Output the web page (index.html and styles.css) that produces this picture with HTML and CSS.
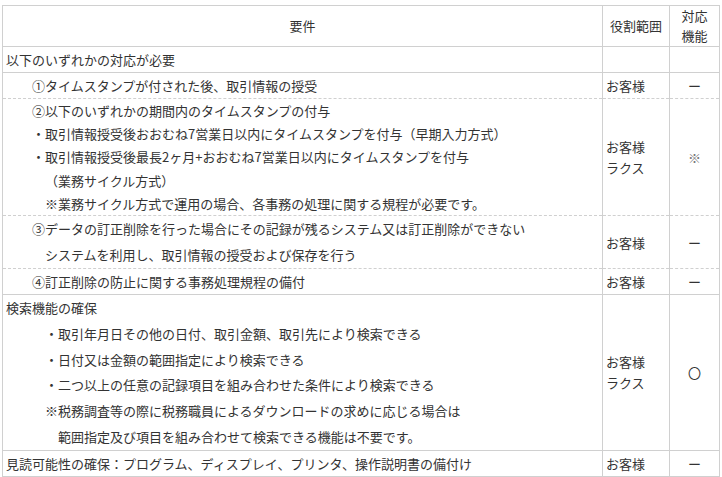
FILE: index.html
```html
<!DOCTYPE html>
<html lang="ja">
<head>
<meta charset="utf-8">
<title>要件</title>
<link rel="stylesheet" href="styles.css">
</head>
<body>
<div class="wrap">
<table class="req">
  <colgroup>
    <col class="c1">
    <col class="c2">
    <col class="c3">
  </colgroup>
  <thead>
    <tr class="head">
      <th>要件</th>
      <th>役割範囲</th>
      <th>対応<br>機能</th>
    </tr>
  </thead>
  <tbody>
    <tr class="single">
      <td class="main">以下のいずれかの対応が必要</td>
      <td></td>
      <td></td>
    </tr>
    <tr class="single dash-b">
      <td class="main"><div class="in1">①タイムスタンプが付された後、取引情報の授受</div></td>
      <td class="who">お客様</td>
      <td class="mark">ー</td>
    </tr>
    <tr class="multi dash-t dash-b">
      <td class="main">
        <div class="in1">②以下のいずれかの期間内のタイムスタンプの付与</div>
        <div class="in1">・取引情報授受後おおむね7営業日以内にタイムスタンプを付与（早期入力方式）</div>
        <div class="in1">・取引情報授受後最長2ヶ月+おおむね7営業日以内にタイムスタンプを付与</div>
        <div class="in2">（業務サイクル方式）</div>
        <div class="in2">※業務サイクル方式で運用の場合、各事務の処理に関する規程が必要です。</div>
      </td>
      <td class="who"><div>お客様</div><div>ラクス</div></td>
      <td class="mark light">※</td>
    </tr>
    <tr class="two dash-t dash-b">
      <td class="main">
        <div class="in1">③データの訂正削除を行った場合にその記録が残るシステム又は訂正削除ができない</div>
        <div class="in2">システムを利用し、取引情報の授受および保存を行う</div>
      </td>
      <td class="who">お客様</td>
      <td class="mark">ー</td>
    </tr>
    <tr class="single dash-t">
      <td class="main"><div class="in1">④訂正削除の防止に関する事務処理規程の備付</div></td>
      <td class="who">お客様</td>
      <td class="mark">ー</td>
    </tr>
    <tr class="search">
      <td class="main">
        <div>検索機能の確保</div>
        <div class="in2">・取引年月日その他の日付、取引金額、取引先により検索できる</div>
        <div class="in2">・日付又は金額の範囲指定により検索できる</div>
        <div class="in2">・二つ以上の任意の記録項目を組み合わせた条件により検索できる</div>
        <div class="in2">※税務調査等の際に税務職員によるダウンロードの求めに応じる場合は</div>
        <div class="in3">範囲指定及び項目を組み合わせて検索できる機能は不要です。</div>
      </td>
      <td class="who"><div>お客様</div><div>ラクス</div></td>
      <td class="mark">〇</td>
    </tr>
    <tr class="single">
      <td class="main">見読可能性の確保：プログラム、ディスプレイ、プリンタ、操作説明書の備付け</td>
      <td class="who">お客様</td>
      <td class="mark">ー</td>
    </tr>
  </tbody>
</table>
</div>
</body>
</html>
```

FILE: styles.css
```css
html, body {
  margin: 0;
  padding: 0;
  background: #fff;
}

body {
  font-family: "Noto Sans CJK JP", "Noto Sans", sans-serif;
  font-size: 13px;
  color: #333;
}

.wrap {
  padding: 5px 0 0 2px;
}

.req {
  border-collapse: collapse;
  table-layout: fixed;
  width: 717px;
}

.c1 { width: 600px; }
.c2 { width: 67px; }
.c3 { width: 50px; }

.req th,
.req td {
  border: 1px solid #d0d0d0;
  padding: 0 3px;
  vertical-align: middle;
  font-weight: normal;
  white-space: nowrap;
}

.head th {
  text-align: center;
  line-height: 20px;
  height: 40px;
}

.single td {
  line-height: 25px;
}

.multi .main div {
  line-height: 23.2px;
}

.two .main div {
  line-height: 26px;
}

.search .main div {
  line-height: 25.8px;
}

.req td.main {
  vertical-align: top;
  text-align: left;
}

.who {
  line-height: 21px;
  text-align: left;
}

.single .who {
  line-height: 25px;
}

.mark {
  text-align: center;
}

.mark.light {
  color: #777;
}

.in1 { padding-left: 26px; }
.in2 { padding-left: 39px; }
.in3 { padding-left: 52px; }

.dash-b td { border-bottom: 1px dashed #d0d0d0; }
.dash-t td { border-top: 1px dashed #d0d0d0; }
```
